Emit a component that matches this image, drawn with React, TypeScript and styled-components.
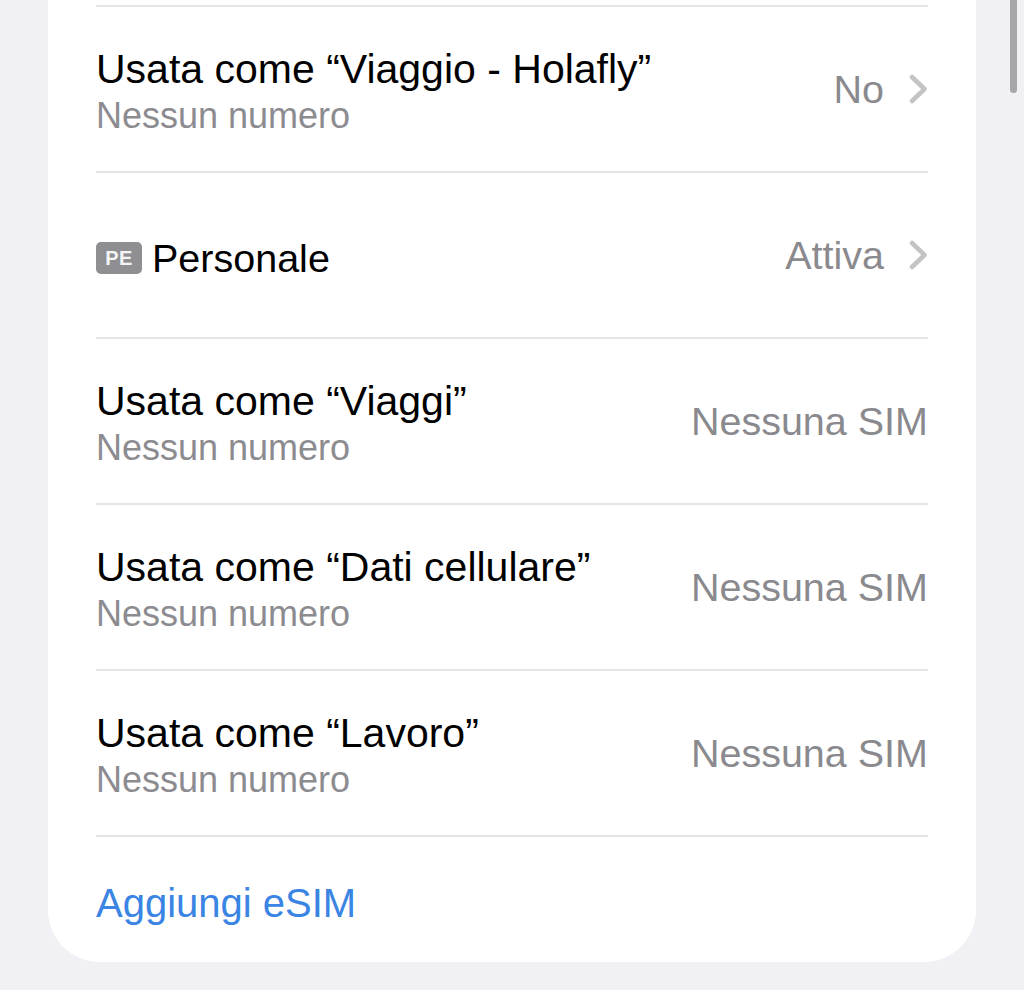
import React from 'react';
import styled, { createGlobalStyle } from 'styled-components';

const GlobalStyle = createGlobalStyle`
  html, body {
    margin: 0;
    padding: 0;
    background: #f0f0f5;
  }
  body {
    font-family: "Liberation Sans", Arial, sans-serif;
    -webkit-font-smoothing: antialiased;
  }
`;

const Page = styled.div`
  position: relative;
  height: 990px;
  padding: 0 48px;
  box-sizing: border-box;
  background: #f0f0f5;
  overflow: hidden;
`;

/* indicatore di scorrimento, sopra il contenuto */
const ScrollIndicator = styled.div`
  position: absolute;
  top: -10px;
  right: 7px;
  width: 7px;
  height: 103px;
  border-radius: 4px;
  background: #a6a6ab;
`;

const Card = styled.div`
  background: #fff;
  border-radius: 0 0 52px 52px;
  padding-top: 5px;
`;

const Row = styled.div`
  padding: 0 48px;
`;

const RowInner = styled.div<{ $height?: number }>`
  display: flex;
  align-items: center;
  height: ${(p) => p.$height ?? 164}px;
  border-top: 2px solid #e4e4e9;
`;

const TextBlock = styled.div`
  flex: 1;
  display: flex;
  flex-direction: column;
  padding-top: 5px;
`;

const Title = styled.div<{ $size?: number }>`
  font-size: ${(p) => p.$size ?? 41}px;
  line-height: 48px;
  color: #000;
  display: flex;
  align-items: center;
  white-space: nowrap;
`;

const Subtitle = styled.div`
  font-size: 36px;
  line-height: 46px;
  color: #8c8c90;
`;

const Badge = styled.span`
  display: inline-flex;
  align-items: center;
  justify-content: center;
  width: 46px;
  height: 32px;
  margin-right: 10px;
  border-radius: 5px;
  background: #8e8e93;
  color: #f4f4f4;
  font-size: 20px;
  font-weight: 700;
  letter-spacing: 0.5px;
`;

const Value = styled.div`
  font-size: 39.5px;
  line-height: 44px;
  color: #8a8a8e;
  white-space: nowrap;
`;

const Chevron = styled.svg`
  width: 19px;
  height: 30px;
  margin-left: 25px;
  flex: none;
`;

const AddLink = styled.div`
  font-size: 40px;
  line-height: 44px;
  color: #3a84e4;
  padding-top: 6px;
`;

const ChevronIcon = () => (
  <Chevron viewBox="0 0 19 30">
    <path d="M3 3 L15.5 15 L3 27" fill="none" stroke="#c4c4c7" strokeWidth="4.6" strokeLinecap="round" strokeLinejoin="round" />
  </Chevron>
);

type Line = {
  title: string;
  subtitle?: string;
  badge?: string;
  value: string;
  chevron?: boolean;
};

const lines: Line[] = [
  { title: 'Usata come “Viaggio - Holafly”', subtitle: 'Nessun numero', value: 'No', chevron: true },
  { title: 'Personale', badge: 'PE', value: 'Attiva', chevron: true },
  { title: 'Usata come “Viaggi”', subtitle: 'Nessun numero', value: 'Nessuna SIM' },
  { title: 'Usata come “Dati cellulare”', subtitle: 'Nessun numero', value: 'Nessuna SIM' },
  { title: 'Usata come “Lavoro”', subtitle: 'Nessun numero', value: 'Nessuna SIM' },
];

const App: React.FC = () => {
  return (
    <>
      <GlobalStyle />
      <Page>
        <ScrollIndicator />
        <Card>
          {lines.map((l) => (
            <Row key={l.title}>
              <RowInner>
                <TextBlock>
                  <Title $size={l.badge ? 39.5 : undefined}>
                    {l.badge && <Badge>{l.badge}</Badge>}
                    {l.title}
                  </Title>
                  {l.subtitle && <Subtitle>{l.subtitle}</Subtitle>}
                </TextBlock>
                <Value>{l.value}</Value>
                {l.chevron && <ChevronIcon />}
              </RowInner>
            </Row>
          ))}
          <Row>
            <RowInner $height={125}>
              <AddLink>Aggiungi eSIM</AddLink>
            </RowInner>
          </Row>
        </Card>
      </Page>
    </>
  );
};

export default App;
